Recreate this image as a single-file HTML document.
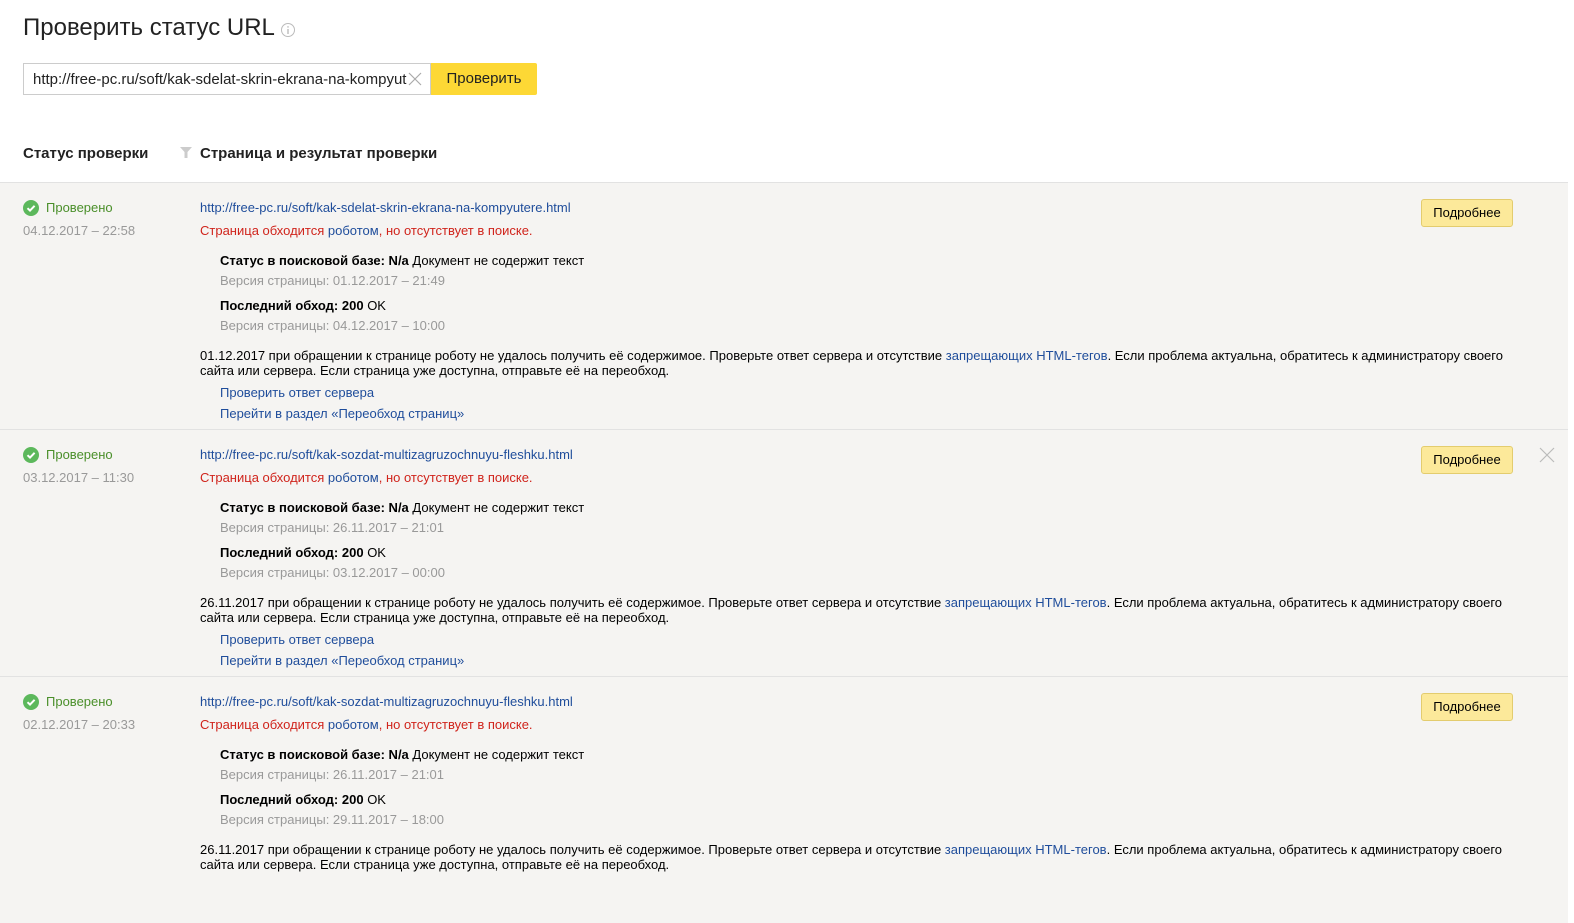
<!DOCTYPE html>
<html><head><meta charset="utf-8"><style>
*{margin:0;padding:0;box-sizing:border-box}
body{width:1574px;height:869px;overflow:hidden;background:#fff;font-family:"Liberation Sans",Arial,sans-serif;color:#000;position:relative;font-size:13px}
.a{position:absolute;white-space:nowrap}
h1{position:absolute;left:23px;top:14px;font-size:24px;font-weight:normal;color:#222}
.row{position:absolute;left:0;width:1568px;height:247px;background:#f5f4f2;border-top:1px solid #e2e2e2}
.g{color:#4a8f2a}.gr{color:#999}.r{color:#d0241c}.b{color:#1f4d9b}
.btn{position:absolute;left:1421px;top:16px;width:92px;height:28px;background:#fce99a;border:1px solid #e3cc6e;border-radius:3px;text-align:center;line-height:26px;font-size:13px}
</style></head><body>
<h1>Проверить статус URL</h1>
<svg class="a" style="left:280px;top:22px" width="16" height="16"><circle cx="8" cy="8" r="6.5" fill="none" stroke="#bbb"/><rect x="7.3" y="7" width="1.4" height="5" fill="#bbb"/><rect x="7.3" y="4.2" width="1.4" height="1.4" fill="#bbb"/></svg>
<div class="a" style="left:23px;top:63px;width:408px;height:32px;border:1px solid #ccc;padding:7px 9px;font-size:15px;color:#222;overflow:hidden">http://free-pc.ru/soft/kak-sdelat-skrin-ekrana-na-kompyut</div>
<svg class="a" style="left:407px;top:71px" width="16" height="16"><path d="M2 2L14 14M14 2L2 14" stroke="#aaa" stroke-width="1.2"/></svg>
<div class="a" style="left:431px;top:63px;width:106px;height:32px;background:#fdd835;border-radius:0 2px 2px 0;text-align:center;line-height:32px;font-size:15px;color:#222">Проверить</div>
<div class="a" style="left:23px;top:145px;font-size:15px;font-weight:bold;color:#222">Статус проверки</div>
<svg class="a" style="left:180px;top:147px" width="12" height="12"><path d="M0 0H12L7.5 5V11H4.5V5Z" fill="#ccc"/></svg>
<div class="a" style="left:200px;top:145px;font-size:15px;font-weight:bold;color:#222">Страница и результат проверки</div>

<div class="row" style="top:182px">
<svg class="a" style="left:23px;top:17px" width="16" height="16"><circle cx="8" cy="8" r="8" fill="#5cb85c"/><path d="M4.5 8.2L7 10.6L11.6 5.8" stroke="#fff" stroke-width="2" fill="none"/></svg>
<div class="a g" style="left:46px;top:17px">Проверено</div>
<div class="a gr" style="left:23px;top:40px">04.12.2017 – 22:58</div>
<div class="a b" style="left:200px;top:17px">http://free-pc.ru/soft/kak-sdelat-skrin-ekrana-na-kompyutere.html</div>
<div class="a r" style="left:200px;top:40px">Страница обходится <span class="b">роботом</span>, но отсутствует в поиске.</div>
<div class="a" style="left:220px;top:70px"><b>Статус в поисковой базе: N/a</b> Документ не содержит текст</div>
<div class="a gr" style="left:220px;top:90px">Версия страницы: 01.12.2017 – 21:49</div>
<div class="a" style="left:220px;top:115px"><b>Последний обход: 200</b> OK</div>
<div class="a gr" style="left:220px;top:135px">Версия страницы: 04.12.2017 – 10:00</div>
<div class="a" style="left:200px;top:165px;line-height:15px">01.12.2017 при обращении к странице роботу не удалось получить её содержимое. Проверьте ответ сервера и отсутствие <span class="b">запрещающих HTML-тегов</span>. Если проблема актуальна, обратитесь к администратору своего<br>сайта или сервера. Если страница уже доступна, отправьте её на переобход.</div>
<div class="a b" style="left:220px;top:202px">Проверить ответ сервера</div>
<div class="a b" style="left:220px;top:223px">Перейти в раздел «Переобход страниц»</div>
<div class="btn">Подробнее</div>
</div>

<div class="row" style="top:429px">
<svg class="a" style="left:23px;top:17px" width="16" height="16"><circle cx="8" cy="8" r="8" fill="#5cb85c"/><path d="M4.5 8.2L7 10.6L11.6 5.8" stroke="#fff" stroke-width="2" fill="none"/></svg>
<div class="a g" style="left:46px;top:17px">Проверено</div>
<div class="a gr" style="left:23px;top:40px">03.12.2017 – 11:30</div>
<div class="a b" style="left:200px;top:17px">http://free-pc.ru/soft/kak-sozdat-multizagruzochnuyu-fleshku.html</div>
<div class="a r" style="left:200px;top:40px">Страница обходится <span class="b">роботом</span>, но отсутствует в поиске.</div>
<div class="a" style="left:220px;top:70px"><b>Статус в поисковой базе: N/a</b> Документ не содержит текст</div>
<div class="a gr" style="left:220px;top:90px">Версия страницы: 26.11.2017 – 21:01</div>
<div class="a" style="left:220px;top:115px"><b>Последний обход: 200</b> OK</div>
<div class="a gr" style="left:220px;top:135px">Версия страницы: 03.12.2017 – 00:00</div>
<div class="a" style="left:200px;top:165px;line-height:15px">26.11.2017 при обращении к странице роботу не удалось получить её содержимое. Проверьте ответ сервера и отсутствие <span class="b">запрещающих HTML-тегов</span>. Если проблема актуальна, обратитесь к администратору своего<br>сайта или сервера. Если страница уже доступна, отправьте её на переобход.</div>
<div class="a b" style="left:220px;top:202px">Проверить ответ сервера</div>
<div class="a b" style="left:220px;top:223px">Перейти в раздел «Переобход страниц»</div>
<div class="btn">Подробнее</div>
<svg class="a" style="left:1539px;top:17px" width="16" height="16"><path d="M1 1L15 15M15 1L1 15" stroke="#bbb" stroke-width="1.2"/></svg>
</div>

<div class="row" style="top:676px">
<svg class="a" style="left:23px;top:17px" width="16" height="16"><circle cx="8" cy="8" r="8" fill="#5cb85c"/><path d="M4.5 8.2L7 10.6L11.6 5.8" stroke="#fff" stroke-width="2" fill="none"/></svg>
<div class="a g" style="left:46px;top:17px">Проверено</div>
<div class="a gr" style="left:23px;top:40px">02.12.2017 – 20:33</div>
<div class="a b" style="left:200px;top:17px">http://free-pc.ru/soft/kak-sozdat-multizagruzochnuyu-fleshku.html</div>
<div class="a r" style="left:200px;top:40px">Страница обходится <span class="b">роботом</span>, но отсутствует в поиске.</div>
<div class="a" style="left:220px;top:70px"><b>Статус в поисковой базе: N/a</b> Документ не содержит текст</div>
<div class="a gr" style="left:220px;top:90px">Версия страницы: 26.11.2017 – 21:01</div>
<div class="a" style="left:220px;top:115px"><b>Последний обход: 200</b> OK</div>
<div class="a gr" style="left:220px;top:135px">Версия страницы: 29.11.2017 – 18:00</div>
<div class="a" style="left:200px;top:165px;line-height:15px">26.11.2017 при обращении к странице роботу не удалось получить её содержимое. Проверьте ответ сервера и отсутствие <span class="b">запрещающих HTML-тегов</span>. Если проблема актуальна, обратитесь к администратору своего<br>сайта или сервера. Если страница уже доступна, отправьте её на переобход.</div>
<div class="btn">Подробнее</div>
</div>
</body></html>
